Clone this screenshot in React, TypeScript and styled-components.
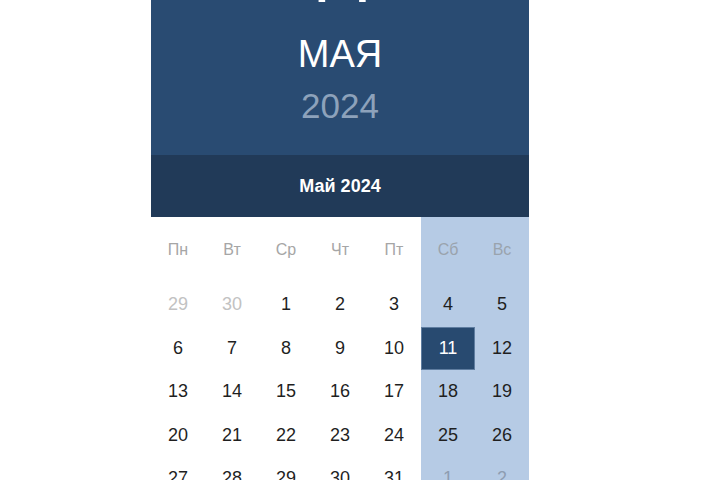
import styled, { createGlobalStyle } from 'styled-components';

const GlobalStyle = createGlobalStyle`
  html, body {
    margin: 0;
    padding: 0;
    background: #ffffff;
    font-family: 'Liberation Sans', Arial, sans-serif;
  }
`;

const Page = styled.div`
  width: 720px;
  height: 480px;
  overflow: hidden;
`;

const Picker = styled.div`
  width: 378px;
  margin: -80px 0 0 151px;
`;

const Header = styled.div`
  background: #294b72;
  padding: 20px 0 29px;
  display: flex;
  flex-direction: column;
  align-items: center;
  color: #ffffff;
`;

const BigDay = styled.div`
  font-family: Roboto, 'Liberation Sans', sans-serif;
  font-size: 72px;
  line-height: 76px;
  height: 76px;
  margin-bottom: 16px;
`;

const MonthName = styled.div`
  font-size: 38px;
  line-height: 44px;
  margin-bottom: 10px;
`;

const Year = styled.div`
  font-size: 35px;
  line-height: 40px;
  color: #8da2bb;
`;

const MonthBar = styled.div`
  height: 62px;
  background: #213a58;
  color: #ffffff;
  font-size: 18px;
  font-weight: bold;
  display: flex;
  align-items: center;
  justify-content: center;
`;

const Grid = styled.div`
  display: grid;
  grid-template-columns: repeat(7, 54px);
  grid-template-rows: 66px;
  grid-auto-rows: 43.5px;
`;

const WeekLabel = styled.div<{ $weekend: boolean }>`
  display: flex;
  align-items: center;
  justify-content: center;
  font-size: 16px;
  color: ${p => (p.$weekend ? '#9aa3ad' : '#a6a6a6')};
  background: ${p => (p.$weekend ? '#b6cbe5' : 'transparent')};
`;

const Day = styled.div<{ $weekend: boolean; $muted: boolean; $active: boolean }>`
  display: flex;
  align-items: center;
  justify-content: center;
  font-size: 18px;
  box-sizing: border-box;
  color: ${p =>
    p.$active ? '#ffffff' : p.$muted ? (p.$weekend ? '#8e9db1' : '#c2c2c2') : '#1f1f1f'};
  background: ${p => (p.$active ? '#284a70' : p.$weekend ? '#b6cbe5' : 'transparent')};
  border: ${p => (p.$active ? '1px solid #5f7da0' : 'none')};
`;

const weekDays = ['Пн', 'Вт', 'Ср', 'Чт', 'Пт', 'Сб', 'Вс'];

const cells: { n: number; muted: boolean }[] = [
  { n: 29, muted: true },
  { n: 30, muted: true },
  ...Array.from({ length: 31 }, (_d, i) => ({ n: i + 1, muted: false })),
  { n: 1, muted: true },
  { n: 2, muted: true },
];

export default function App() {
  return (
    <Page>
      <GlobalStyle />
      <Picker>
        <Header>
          <BigDay>11</BigDay>
          <MonthName>МАЯ</MonthName>
          <Year>2024</Year>
        </Header>
        <MonthBar>Май 2024</MonthBar>
        <Grid>
          {weekDays.map((d, i) => (
            <WeekLabel key={d} $weekend={i >= 5}>
              {d}
            </WeekLabel>
          ))}
          {cells.map((c, i) => (
            <Day
              key={i}
              $weekend={i % 7 >= 5}
              $muted={c.muted}
              $active={!c.muted && c.n === 11}
            >
              {c.n}
            </Day>
          ))}
        </Grid>
      </Picker>
    </Page>
  );
}
